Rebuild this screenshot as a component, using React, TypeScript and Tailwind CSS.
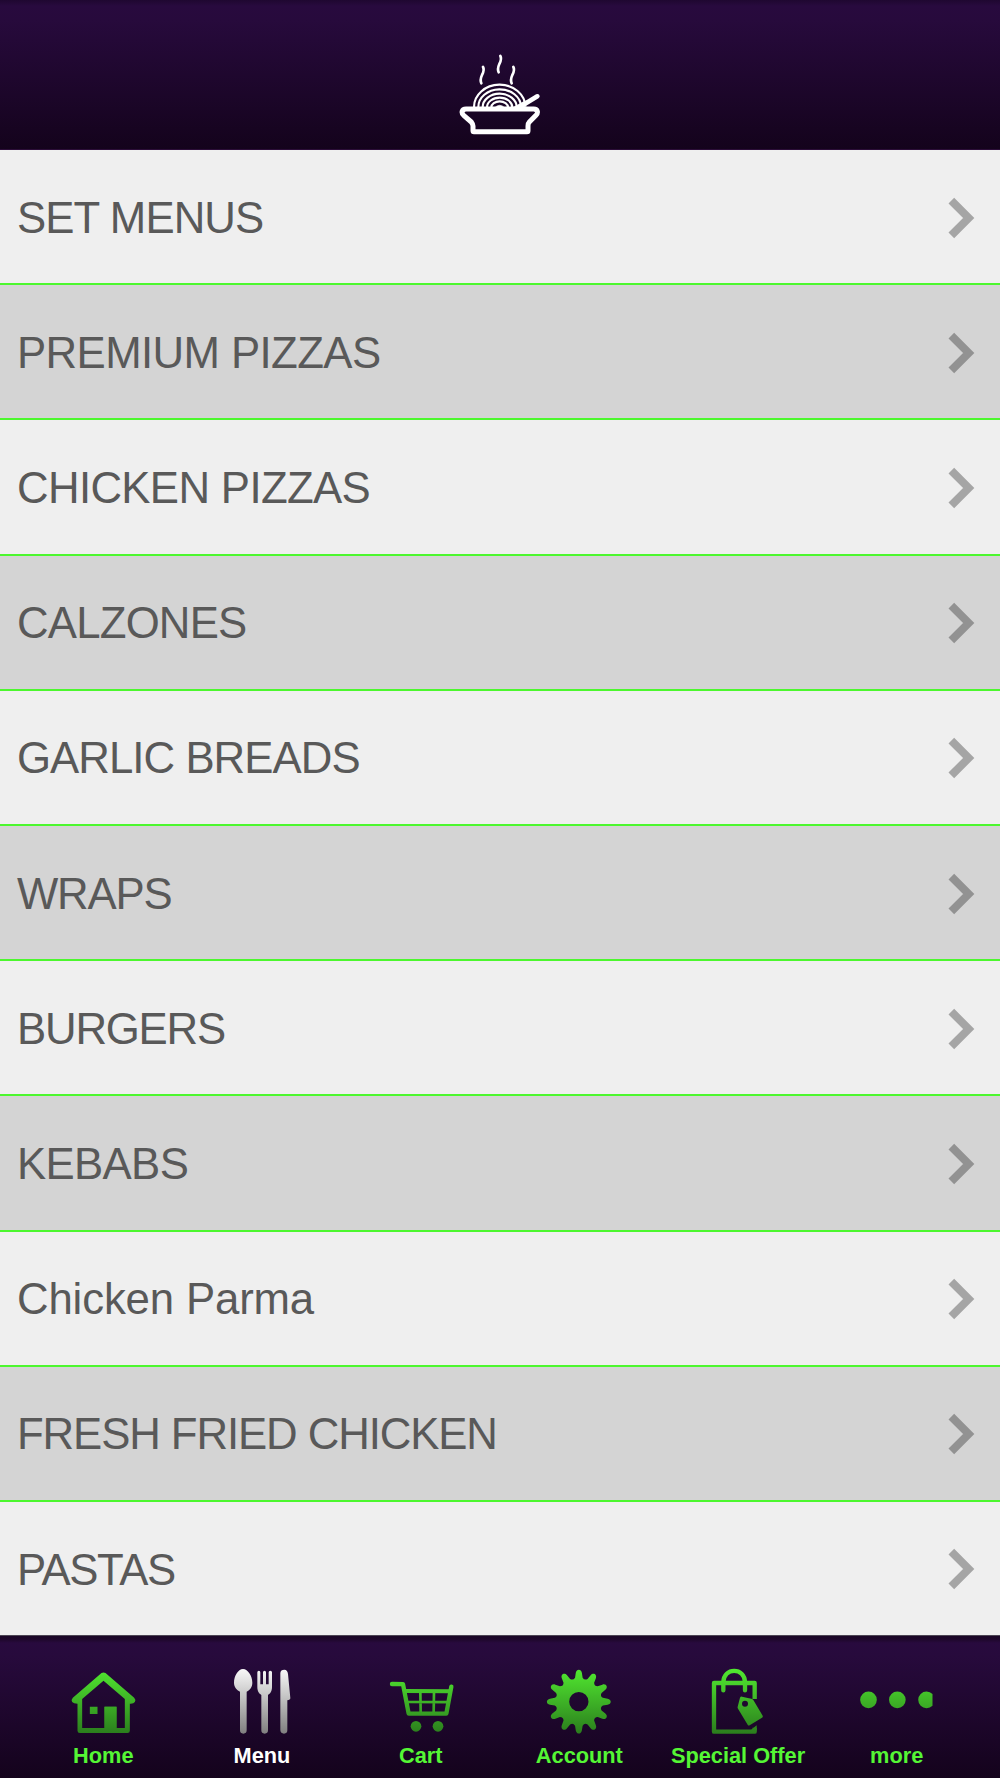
import type { ReactNode } from "react";

const CATEGORIES = [
  { name: "SET MENUS", tracking: "tracking-[-0.9px]" },
  { name: "PREMIUM PIZZAS", tracking: "tracking-[-0.6px]" },
  { name: "CHICKEN PIZZAS", tracking: "tracking-[-0.65px]" },
  { name: "CALZONES", tracking: "tracking-[-0.8px]" },
  { name: "GARLIC BREADS", tracking: "tracking-[-0.95px]" },
  { name: "WRAPS", tracking: "tracking-[-1.2px]" },
  { name: "BURGERS", tracking: "tracking-[-1.2px]" },
  { name: "KEBABS", tracking: "tracking-[-0.65px]" },
  { name: "Chicken Parma", tracking: "tracking-[-0.16px]" },
  { name: "FRESH FRIED CHICKEN", tracking: "tracking-[-1.1px]" },
  { name: "PASTAS", tracking: "tracking-[-1.4px]" },
];

function NoodleLogo() {
  return (
    <svg className="w-[84px] h-[88px]" viewBox="54 30 252 264" fill="none" stroke="#fff" strokeLinecap="round" strokeLinejoin="round">
      <g strokeWidth="8">
        <path d="M129 81c5 9 1 16-3 24-4 9-6 16-2 25" />
        <path d="M181 48c5 9 1 16-3 24-4 9-6 16-2 25" />
        <path d="M220 81c5 9 1 16-3 24-4 9-6 16-2 25" />
      </g>
      <g strokeWidth="6.5" strokeLinecap="butt">
        <path d="M102 202a77 67 0 0 1 154-2" />
        <path d="M115 202a64 53 0 0 1 128-2" />
        <path d="M128 202a51 41 0 0 1 102 0" />
        <path d="M141 202a38 29 0 0 1 76 0" />
        <path d="M154 202a25 18 0 0 1 50 0" />
      </g>
      <path d="M164 203q15-15 30 0z" fill="#fff" strokeWidth="2" />
      <path d="M238 202l54-33" strokeWidth="14" />
      <path d="M215 205l38-21 18-2-26 24z" fill="#fff" strokeWidth="2" />
      <path d="M78 207H281c13 0 14 12 7 19l-20 20c-4 4-4 8-4 12v14q0 3-3 3H102q-3 0-3-3v-14c0-5-2-8-5-12L71 226c-8-8-6-19 7-19z" strokeWidth="15" />
    </svg>
  );
}

function Chevron() {
  return (
    <svg className="w-[30px] h-[44px]" viewBox="140 46 90 132" fill="none">
      <path d="M153 60L205 112L153 164" stroke="#000" strokeOpacity="0.31" strokeWidth="24" />
    </svg>
  );
}

function Gradients() {
  return (
    <svg className="absolute w-0 h-0" aria-hidden="true">
      <defs>
        <linearGradient id="green" gradientUnits="userSpaceOnUse" x1="0" y1="132" x2="0" y2="325">
          <stop offset="0" stopColor="#51e830" />
          <stop offset="1" stopColor="#2b7e1d" />
        </linearGradient>
        <linearGradient id="silver" gradientUnits="userSpaceOnUse" x1="0" y1="132" x2="0" y2="325">
          <stop offset="0" stopColor="#f8f8f8" />
          <stop offset="1" stopColor="#808080" />
        </linearGradient>
      </defs>
    </svg>
  );
}

function HomeIcon() {
  return (
    <svg className="w-[72px] h-[72px]" viewBox="52.5 120 216 216" fill="none">
      <path
        fill="url(#green)"
        fillRule="evenodd"
        d="M156 144q6-3 12 0L254 218q6 6 2 13-4 6-15 5V317q0 7-7 7H91q-7 0-7-7V236q-12 0-16-5-4-7 2-13zM162 167L98 222V309H165V245H201V309H226V222z"
      />
      <path fill="url(#green)" d="M165 245H201V312H165zM121 245H144V267H121z" />
    </svg>
  );
}

function CutleryIcon() {
  return (
    <svg className="w-[72px] h-[72px]" viewBox="528 120 216 216" fill="url(#silver)">
      <path d="M579 132c15 0 28 22 28 41 0 13-7 22-17 27V316q0 10-10 10t-10-10V200c-10-5-18-14-18-27 0-19 12-41 27-41z" />
      <path d="M622 142q0-5 4.500-5t4.500 5v36h8v-36q0-5 4.500-5t4.500 5v36h8v-36q0-5 5-5t5 5v44c0 13-5 19-12 24V316q0 10-10 10t-10-10V210c-7-5-12-11-12-24z" />
      <path d="M691 145c0-8 5-11 12-11 7 0 10 5 11 13l7 72q0 6-9 7V316q0 10-10 10t-11-10z" />
    </svg>
  );
}

function CartIcon() {
  return (
    <svg className="w-[72px] h-[72px]" viewBox="45 120 216 216" fill="none" stroke="url(#green)" strokeLinecap="round" strokeLinejoin="round">
      <path d="M66 177l33 .5L116 266H229L244 185" strokeWidth="13" />
      <path d="M105 198L239 198.500" strokeWidth="12" />
      <path d="M112 231L232 231.500M151 200L152 262M192 200L191 262" strokeWidth="8" />
      <circle cx="138" cy="304" r="16" fill="url(#green)" stroke="none" />
      <circle cx="204" cy="304" r="16" fill="url(#green)" stroke="none" />
    </svg>
  );
}

// twelve rounded teeth, 30 degrees apart
const TEETH = Array.from({ length: 12 }, (_, i) => {
  const at = (r: number, deg: number) => {
    const a = ((i * 30 + deg - 90) * Math.PI) / 180;
    return `${(628 + r * Math.cos(a)).toFixed(1)} ${(230 + r * Math.sin(a)).toFixed(1)}`;
  };
  return `${i === 0 ? "M" : "L"}${at(73, -9)}L${at(87, -6)}C${at(99, -4)} ${at(99, 4)} ${at(87, 6)}L${at(73, 9)}Q${at(65, 15)} ${at(73, 21)}`;
}).join("");

function GearIcon() {
  return (
    <svg className="w-[72px] h-[72px]" viewBox="520.5 120 216 216">
      <path fill="url(#green)" fillRule="evenodd" d={`${TEETH}ZM657 230a29 29 0 1 0-58 0a29 29 0 1 0 58 0Z`} />
    </svg>
  );
}

function BagIcon() {
  return (
    <svg className="w-[72px] h-[72px]" viewBox="126 120 216 216" fill="none" stroke="url(#green)" strokeLinejoin="round">
      <path d="M284 222V174H162V320H284V308" strokeWidth="13" />
      <path d="M190 196V172c0-46 65-46 65 0V196" strokeWidth="13" strokeLinecap="round" />
      <path d="M272 316l18-15v15z" fill="url(#green)" stroke="none" />
      <path
        fill="url(#green)"
        stroke="none"
        fillRule="evenodd"
        d="M240 218q2-4 6-3L274 221q4 1 6 4L308 272q2 4-2 6L269 301q-4 2-6-2L234 251q-2-3-1-6zM264 236a9 9 0 1 0-18 0a9 9 0 1 0 18 0z"
      />
    </svg>
  );
}

function MoreIcon() {
  return (
    <svg className="w-[72px] h-[72px] overflow-visible" viewBox="601.5 120 216 216" fill="url(#green)">
      <circle cx="624" cy="224.500" r="25" />
      <circle cx="710.500" cy="224.500" r="25" />
      <path d="M816 207v35A25 25 0 1 1 816 207z" />
    </svg>
  );
}

const TABS: { label: string; icon: ReactNode; active?: boolean }[] = [
  { label: "Home", icon: <HomeIcon /> },
  { label: "Menu", icon: <CutleryIcon />, active: true },
  { label: "Cart", icon: <CartIcon /> },
  { label: "Account", icon: <GearIcon /> },
  { label: "Special Offer", icon: <BagIcon /> },
  { label: "more", icon: <MoreIcon /> },
];

export default function App() {
  return (
    <div className="w-[1000px] h-[1778px] flex flex-col overflow-hidden bg-[#efefef] font-['Liberation_Sans',Arial,sans-serif]">
      <header className="h-[150px] shrink-0 flex justify-center items-end pb-[11px] border-b border-[#2b0d38] bg-[linear-gradient(to_bottom,#1f0730_0px,#280a3e_6px,#270a3c_20px,#14031c_149px)]">
        <NoodleLogo />
      </header>

      {/* Categories */}
      <ul className="h-[1485px] shrink-0 overflow-hidden">
        {CATEGORIES.map(({ name, tracking }) => (
          <li
            key={name}
            className="h-[135.2px] flex items-center justify-between pt-[2px] pl-[17px] pr-[23.3px] border-b-2 border-[#4cf72e] odd:bg-[#efefef] even:bg-[#d4d4d4]"
          >
            <span className={`text-[43.75px] leading-none text-[#595959] ${tracking}`}>{name}</span>
            <Chevron />
          </li>
        ))}
      </ul>

      {/* Tab bar */}
      <nav className="relative h-[143px] shrink-0 flex px-[24px] pt-[29px] border-t border-[#4c4553] bg-[linear-gradient(to_bottom,#1a0626_0px,#1d0729_3px,#280a3e_7px,#270a3c_20px,#14031c_142px)]">
        <Gradients />
        {TABS.map((tab) => (
          <button key={tab.label} className="flex-1 basis-0 min-w-0 flex flex-col items-center">
            {tab.icon}
            <span className={`mt-[6.5px] text-[21.75px] leading-[24px] font-bold whitespace-nowrap ${tab.active ? "text-white" : "text-[#55f635]"}`}>
              {tab.label}
            </span>
          </button>
        ))}
      </nav>
    </div>
  );
}
